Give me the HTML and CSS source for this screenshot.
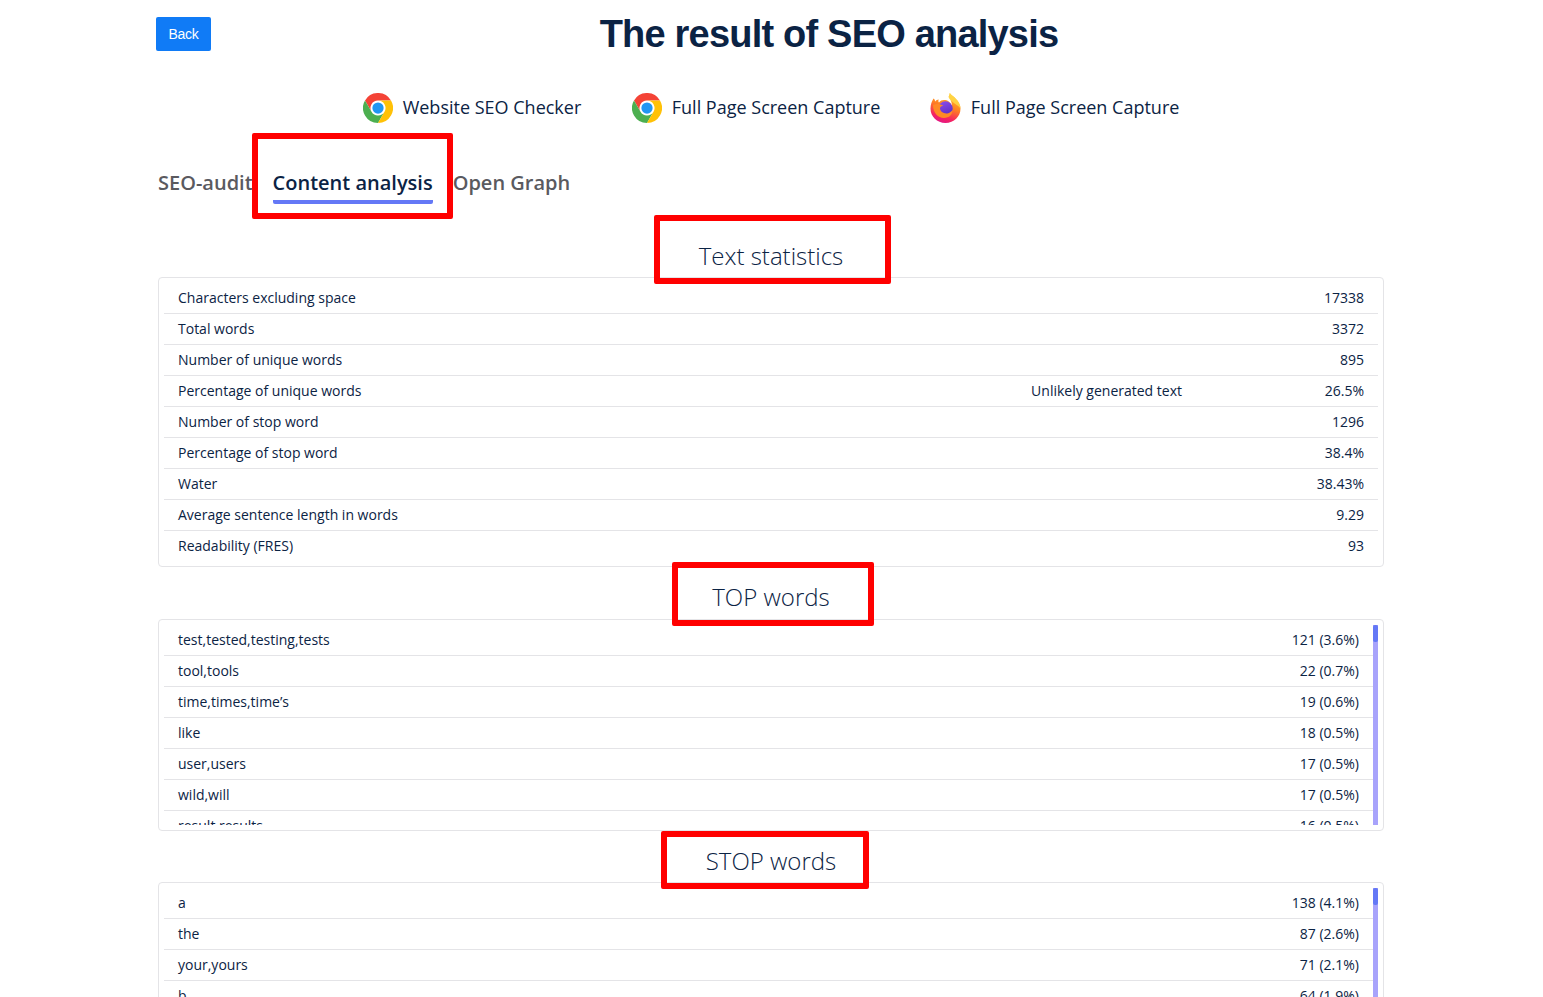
FILE: index.html
```html
<!DOCTYPE html>
<html lang="en">
<head>
    <meta charset="UTF-8">
    <title>The result of SEO analysis</title>
    <link rel="stylesheet" href="styles.css">
</head>

<body>

<div class="container">

    <header class="top">
        <a class="back-btn" href="#">Back</a>
        <h1>The result of SEO analysis</h1>
    </header>

    <nav class="ext-links">
        <a href="#">
            <svg class="ext-icon" viewBox="0 0 48 48">
                <path fill="#f44336" d="M3.2 12A24 24 0 0 1 44.8 12H24A12 12 0 0 0 13.6 30Z"/>
                <path fill="#4caf50" d="M3.2 12L13.6 30A12 12 0 0 0 34.4 30L24 48A24 24 0 0 1 3.2 12Z"/>
                <path fill="#ffc107" d="M24 48L34.4 30A12 12 0 0 0 24 12H44.8A24 24 0 0 1 24 48Z"/>
                <circle fill="#2196f3" cx="24" cy="24" r="9"/>
            </svg>
            Website SEO Checker
        </a>
        <a href="#">
            <svg class="ext-icon" viewBox="0 0 48 48">
                <path fill="#f44336" d="M3.2 12A24 24 0 0 1 44.8 12H24A12 12 0 0 0 13.6 30Z"/>
                <path fill="#4caf50" d="M3.2 12L13.6 30A12 12 0 0 0 34.4 30L24 48A24 24 0 0 1 3.2 12Z"/>
                <path fill="#ffc107" d="M24 48L34.4 30A12 12 0 0 0 24 12H44.8A24 24 0 0 1 24 48Z"/>
                <circle fill="#2196f3" cx="24" cy="24" r="9"/>
            </svg>
            Full Page Screen Capture
        </a>
        <a href="#">
            <svg class="ext-icon fx-icon" viewBox="0 0 31 30">
                <defs>
                    <linearGradient id="fxBody" x1="0.7" y1="0" x2="0.35" y2="1">
                        <stop offset="0" stop-color="#ffc72e"/>
                        <stop offset="0.45" stop-color="#ff8022"/>
                        <stop offset="0.8" stop-color="#f5245f"/>
                        <stop offset="1" stop-color="#e31587"/>
                    </linearGradient>
                    <linearGradient id="fxCore" x1="0.3" y1="0" x2="0.7" y2="1">
                        <stop offset="0" stop-color="#8a4be8"/>
                        <stop offset="1" stop-color="#5a2cc4"/>
                    </linearGradient>
                </defs>
                <path fill="url(#fxBody)" d="M3.5 5.5C4.5 6.2 5 7.5 5.2 8.4C6 7.2 7.4 6.4 8.8 6.4C8 7.8 8.4 8.8 9 9.4C10.4 7.4 12.6 6.6 15.4 7C18.6 7.6 21.4 10 21.6 13.5C22.6 10.5 20.5 6 18.6 4C19.2 2.6 19.6 1.2 19.8 0C21.6 2.5 24 3.5 26 6C28.6 8.6 30.5 12 30.5 15.5C30.5 23.5 24 30 15.5 30C7 30 .5 23.5 .5 15.5C.5 11.5 1.8 8.2 3.5 5.5Z"/>
                <path fill="#ffdc4a" opacity="0.8" d="M19.8 0C21.6 2.5 24 3.5 26 6C28.6 8.6 30.5 12 30.5 15.5C28.6 12.5 25 11 22.6 9C21 7.6 19 6 18.6 4C19.2 2.6 19.6 1.2 19.8 0Z"/>
                <circle fill="url(#fxCore)" cx="15.5" cy="15.5" r="7.2"/>
                <path fill="#ff8a24" d="M3 11.8C6.4 10.4 10 10.8 13.4 12.6C11.4 13 10 14 10 15.3C10 18.6 13.6 20.8 17.2 20.4C19.8 20 21.6 18.7 22.6 16.8C22.6 21.8 19 25 14 25C8 25 3 20 3 11.8Z"/>
            </svg>
            Full Page Screen Capture
        </a>
    </nav>

    <div class="tabs">
        <a class="tab" href="#">SEO-audit</a>
        <a class="tab active mark mark-tab" href="#">Content analysis</a>
        <a class="tab" href="#">Open Graph</a>
    </div>

    <div class="section-title first">
        <h2 class="mark mark-stats">Text statistics</h2>
    </div>
    <section class="card">
        <div class="row"><span class="name">Characters excluding space</span><span class="value">17338</span></div>
        <div class="row"><span class="name">Total words</span><span class="value">3372</span></div>
        <div class="row"><span class="name">Number of unique words</span><span class="value">895</span></div>
        <div class="row"><span class="name">Percentage of unique words</span><span class="note">Unlikely generated text</span><span class="value">26.5%</span></div>
        <div class="row"><span class="name">Number of stop word</span><span class="value">1296</span></div>
        <div class="row"><span class="name">Percentage of stop word</span><span class="value">38.4%</span></div>
        <div class="row"><span class="name">Water</span><span class="value">38.43%</span></div>
        <div class="row"><span class="name">Average sentence length in words</span><span class="value">9.29</span></div>
        <div class="row"><span class="name">Readability (FRES)</span><span class="value">93</span></div>
    </section>

    <div class="section-title">
        <h2 class="mark mark-top">TOP words</h2>
    </div>
    <section class="card scroll-card">
        <div class="scroll-list">
            <div class="row"><span class="name">test,tested,testing,tests</span><span class="count">121 (3.6%)</span></div>
            <div class="row"><span class="name">tool,tools</span><span class="count">22 (0.7%)</span></div>
            <div class="row"><span class="name">time,times,time’s</span><span class="count">19 (0.6%)</span></div>
            <div class="row"><span class="name">like</span><span class="count">18 (0.5%)</span></div>
            <div class="row"><span class="name">user,users</span><span class="count">17 (0.5%)</span></div>
            <div class="row"><span class="name">wild,will</span><span class="count">17 (0.5%)</span></div>
            <div class="row"><span class="name">result,results</span><span class="count">16 (0.5%)</span></div>
        </div>
        <div class="scrollbar"><div class="thumb"></div></div>
    </section>

    <div class="section-title stop">
        <h2 class="mark mark-stop">STOP words</h2>
    </div>
    <section class="card scroll-card">
        <div class="scroll-list">
            <div class="row"><span class="name">a</span><span class="count">138 (4.1%)</span></div>
            <div class="row"><span class="name">the</span><span class="count">87 (2.6%)</span></div>
            <div class="row"><span class="name">your,yours</span><span class="count">71 (2.1%)</span></div>
            <div class="row"><span class="name">b</span><span class="count">64 (1.9%)</span></div>
        </div>
        <div class="scrollbar"><div class="thumb"></div></div>
    </section>

</div>

</body>
</html>
```

FILE: styles.css
```css
html {
    overflow: hidden;
}

body {
    font-family: 'Open Sans', sans-serif;
    background-color: #fff;
    color: #0b2344;
    margin: 0;
    padding: 0;
}

a {
    color: inherit;
    text-decoration: none;
}

.container {
    width: 1226px;
    margin: 0 0 0 158px;
}

/* header */
.top {
    display: flex;
    align-items: flex-start;
    height: 68px;
}

.back-btn {
    background: #107bf6;
    color: #fff;
    font-family: 'Liberation Sans', sans-serif;
    font-size: 14px;
    letter-spacing: -0.3px;
    line-height: 34px;
    width: 55px;
    text-align: center;
    border-radius: 2px;
    margin: 17px 0 0 -2px;
}

h1 {
    flex: 1;
    margin: 0;
    padding-left: 63px;
    text-align: center;
    font-family: 'Liberation Sans', sans-serif;
    font-size: 38px;
    line-height: 68px;
    font-weight: 700;
    letter-spacing: -0.8px;
    color: #0b2344;
}

/* extension links */
.ext-links {
    display: flex;
    justify-content: center;
    gap: 50.5px;
    height: 80px;
    padding-top: 25px;
    box-sizing: border-box;
}

.ext-links a {
    display: flex;
    align-items: flex-start;
    gap: 10px;
    height: 30px;
    line-height: 28px;
    font-size: 18px;
}

.ext-icon {
    width: 30px;
    height: 30px;
}

.fx-icon {
    width: 31px;
    margin-left: -1px;
}

/* tabs */
.tabs {
    display: flex;
    gap: 20px;
    height: 56px;
    padding-top: 21px;
    box-sizing: border-box;
}

.tab {
    font-size: 20px;
    font-weight: 600;
    line-height: 27px;
    height: 35px;
    color: #5a5a5f;
}

.tab.active {
    color: #0b2344;
    border-bottom: 4px solid #6478f6;
    border-radius: 2px;
    box-sizing: border-box;
}

/* red annotation frames */
.mark {
    position: relative;
}

.mark::after {
    content: "";
    position: absolute;
    border: 6px solid #f00;
    border-radius: 2px;
}

.mark-tab::after { top: -36px; bottom: -19px; left: -21px; right: -20px; }
.mark-stats::after { top: -23px; bottom: -10px; left: -45px; right: -48px; }
.mark-top::after { top: -17px; bottom: -11px; left: -40px; right: -44px; }
.mark-stop::after { top: -12px; bottom: -10px; left: -45px; right: -33px; }

/* section headings */
.section-title {
    text-align: center;
    height: 52px;
    padding-top: 12px;
    box-sizing: border-box;
}

.section-title.first {
    height: 73px;
    padding-top: 34px;
}

.section-title.stop {
    height: 51px;
}

h2 {
    display: inline-block;
    margin: 0;
    font-size: 24px;
    font-weight: 300;
    line-height: 36px;
    color: #0b2344;
}

/* cards */
.card {
    border: 1px solid #e4e4e7;
    border-radius: 4px;
    padding: 5px;
}

.scroll-card {
    display: flex;
    height: 200px;
}

.row {
    display: flex;
    padding: 5px 14px;
    font-size: 14px;
    line-height: 20px;
    border-bottom: 1px solid #e4e4e7;
}

.card > .row:last-child {
    border-bottom: 0;
}

.name {
    flex: 1;
}

.value {
    width: 182px;
    text-align: right;
}

.scroll-list {
    flex: 1;
    overflow: hidden;
}

/* the list scrollbar, scrolled to the top */
.scrollbar {
    width: 5px;
    background: #a8a3fb;
}

.thumb {
    height: 17px;
    background: #6478f6;
    border-radius: 2px;
}
```
